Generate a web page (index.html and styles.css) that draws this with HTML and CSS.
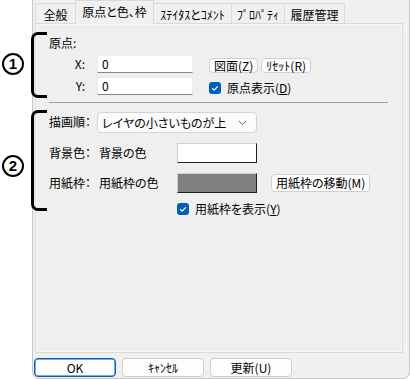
FILE: index.html
```html
<!DOCTYPE html>
<html lang="ja">
<head>
    <meta charset="UTF-8">
    <title>原点と色、枠</title>
    <link rel="stylesheet" href="styles.css">
</head>
<body>
<div class="window">

    <div class="dialog">
        <div class="tabs">
            <div class="tab tab-general">全般</div>
            <div class="tab tab-origin active">原点と色、枠</div>
            <div class="tab tab-status">ｽﾃｲﾀｽとｺﾒﾝﾄ</div>
            <div class="tab tab-prop">ﾌﾟﾛﾊﾟﾃｨ</div>
            <div class="tab tab-history">履歴管理</div>
        </div>

        <div class="panel">
            <!-- 原点 -->
            <div class="origin">
                <div class="origin-title">原点:</div>

                <div class="axis-label">X:</div>
                <div class="text-field">0</div>
                <div class="origin-buttons">
                    <button class="mini-button">図面(Z)</button>
                    <button class="mini-button">ﾘｾｯﾄ(R)</button>
                </div>

                <div class="axis-label">Y:</div>
                <div class="text-field">0</div>
                <div class="check origin-check">
                    <span class="check-box"><svg width="12" height="12" viewBox="0 0 12 12"><path d="M3.2 6.3 L5.1 8.1 L8.8 4.3" fill="none" stroke="#fff" stroke-width="1.2"/></svg></span>
                    <span>原点表示(<u>D</u>)</span>
                </div>
            </div>

            <div class="separator"></div>

            <!-- 描画順と色 -->
            <div class="colors">
                <div class="row-label">描画順：</div>
                <div class="select">
                    <span>レイヤの小さいものが上</span>
                    <svg width="9" height="6" viewBox="0 0 9 6"><path d="M0.8 1 L4.5 4.6 L8.2 1" fill="none" stroke="#606060" stroke-width="1"/></svg>
                </div>

                <div class="row-label">背景色：</div>
                <div class="color-name">背景の色</div>
                <div class="swatch swatch-white"></div>

                <div class="row-label">用紙枠：</div>
                <div class="color-name">用紙枠の色</div>
                <div class="swatch swatch-gray"></div>
                <button class="mini-button move-button">用紙枠の移動(M)</button>

                <div class="check paper-check">
                    <span class="check-box"><svg width="12" height="12" viewBox="0 0 12 12"><path d="M3.2 6.3 L5.1 8.1 L8.8 4.3" fill="none" stroke="#fff" stroke-width="1.2"/></svg></span>
                    <span>用紙枠を表示(<u>Y</u>)</span>
                </div>
            </div>
        </div>

        <div class="footer">
            <button class="push-button default">OK</button>
            <button class="push-button">ｷｬﾝｾﾙ</button>
            <button class="push-button">更新(U)</button>
        </div>
    </div>

    <!-- 注釈 -->
    <div class="mark mark-1">1</div>
    <div class="bracket bracket-1"></div>
    <div class="mark mark-2">2</div>
    <div class="bracket bracket-2"></div>

</div>
</body>
</html>
```

FILE: styles.css
```css
body {
    margin: 0;
    background-color: #ffffff;
    font-family: "Noto Sans CJK JP", "Noto Sans", sans-serif;
    font-size: 12px;
    font-feature-settings: "palt";
    color: #000000;
}

.window {
    position: relative;
    width: 410px;
    height: 379px;
    display: flex;
}

.dialog {
    margin-left: 32px;
    width: 378px;
    height: 379px;
    box-sizing: border-box;
    border: 1px solid #c6c6c6;
    border-top: none;
    border-radius: 0 0 7px 7px;
    background-color: #f0f0f0;
    padding: 0 6px 1px 2px;
    display: flex;
    flex-direction: column;
}

/* タブ */
.tabs {
    height: 23px;
    display: flex;
    align-items: flex-end;
}

.tab {
    height: 20px;
    box-sizing: border-box;
    border: 1px solid #dadada;
    border-bottom: none;
    margin-right: -1px;
    background-color: #f0f0f0;
    text-align: center;
    line-height: 21px;
    white-space: nowrap;
}

.tab.active {
    position: relative;
    z-index: 1;
    height: 24px;
    margin-bottom: -1px;
    line-height: 22px;
    background-color: #f0f0f0;
}

.tab-general { width: 41px; }
.tab-origin { width: 79px; }
.tab-status { width: 79px; }
.tab-prop { width: 54px; }
.tab-history { width: 61px; }

.panel {
    flex: 1;
    border: 1px solid #dadada;
    box-shadow: inset 0 0 0 1px #f8f8f8;
    background-color: #efefef;
    padding: 11px 14px 0 13px;
}

/* 原点 */
.origin {
    display: grid;
    grid-template-columns: 48px 96px auto;
    grid-template-rows: 16px 18px 18px;
    row-gap: 4px;
}

.origin-title {
    grid-column: 1 / -1;
    line-height: 16px;
}

.axis-label {
    text-align: right;
    padding-right: 12px;
    line-height: 18px;
}

.text-field {
    height: 18px;
    box-sizing: border-box;
    background-color: #ffffff;
    border: 1px solid #ebebeb;
    border-bottom-color: #868686;
    padding-left: 4px;
    line-height: 16px;
}

.origin-buttons {
    margin-left: 16px;
    display: flex;
    gap: 3px;
    align-self: end;
}

.mini-button {
    height: 15px;
    box-sizing: border-box;
    padding: 0 4px;
    border: 1px solid #cfcfcf;
    border-radius: 4px;
    background-color: #fdfdfd;
    font-family: inherit;
    font-size: 12px;
    font-feature-settings: "palt";
    line-height: 12px;
    color: #000000;
    white-space: nowrap;
}

.check {
    display: flex;
    align-items: center;
    gap: 6px;
    white-space: nowrap;
    line-height: 14px;
}

.check-box {
    width: 12px;
    height: 12px;
    border-radius: 3px;
    background-color: #005fb8;
    display: flex;
}

.origin-check {
    margin-left: 16px;
    margin-top: 3px;
    align-self: center;
}

.separator {
    margin-top: 7px;
    border-top: 1px solid #a0a0a0;
}

/* 描画順と色 */
.colors {
    margin-top: 9px;
    display: grid;
    grid-template-columns: 48px 80px 80px auto;
    grid-template-rows: 21px 20px 20px 12px;
    row-gap: 10px;
}

.row-label {
    grid-column: 1;
    line-height: 20px;
    white-space: nowrap;
}

.select {
    grid-column: 2 / 4;
    box-sizing: border-box;
    border: 1px solid #d4d4d4;
    border-radius: 4px;
    background-color: #fbfbfb;
    padding: 0 9px 0 4px;
    display: flex;
    align-items: center;
    justify-content: space-between;
    line-height: 18px;
}

.color-name {
    padding-left: 2px;
    line-height: 20px;
    white-space: nowrap;
}

.swatch {
    box-sizing: border-box;
    border: 1px solid;
    border-color: #d0d0d0 #202020 #202020 #d0d0d0;
}

.swatch-white {
    background-color: #ffffff;
}

.swatch-gray {
    background-color: #808080;
}

.move-button {
    height: 18px;
    margin-left: 14px;
    align-self: center;
    justify-self: start;
    padding: 0 4px;
}

.paper-check {
    grid-column: 3 / 5;
}

/* 下のボタン */
.footer {
    margin-top: 5px;
    margin-left: -1px;
    display: flex;
    gap: 6px;
}

.push-button {
    width: 82px;
    height: 19px;
    box-sizing: border-box;
    border: 1px solid #cfcfcf;
    border-radius: 4px;
    background-color: #fdfdfd;
    font-family: inherit;
    font-size: 12px;
    line-height: 15px;
    padding: 0;
    color: #000000;
}

.push-button.default {
    border-color: #005fb8;
    box-shadow: inset 0 0 0 0.5px #005fb8;
}

/* 注釈の丸数字と括弧 */
.mark {
    position: absolute;
    left: 2px;
    width: 22px;
    height: 22px;
    box-sizing: border-box;
    border: 2px solid #000000;
    border-radius: 50%;
    font-family: "Liberation Sans", sans-serif;
    font-weight: bold;
    font-size: 15px;
    line-height: 18px;
    text-align: center;
}

.mark-1 { top: 53px; }
.mark-2 { top: 155px; }

.bracket {
    position: absolute;
    left: 31px;
    width: 13px;
    border: 3px solid #000000;
    border-right: none;
    border-radius: 7px 0 0 7px;
}

.bracket-1 {
    top: 32px;
    height: 60px;
}

.bracket-2 {
    top: 110px;
    height: 95px;
}
```
